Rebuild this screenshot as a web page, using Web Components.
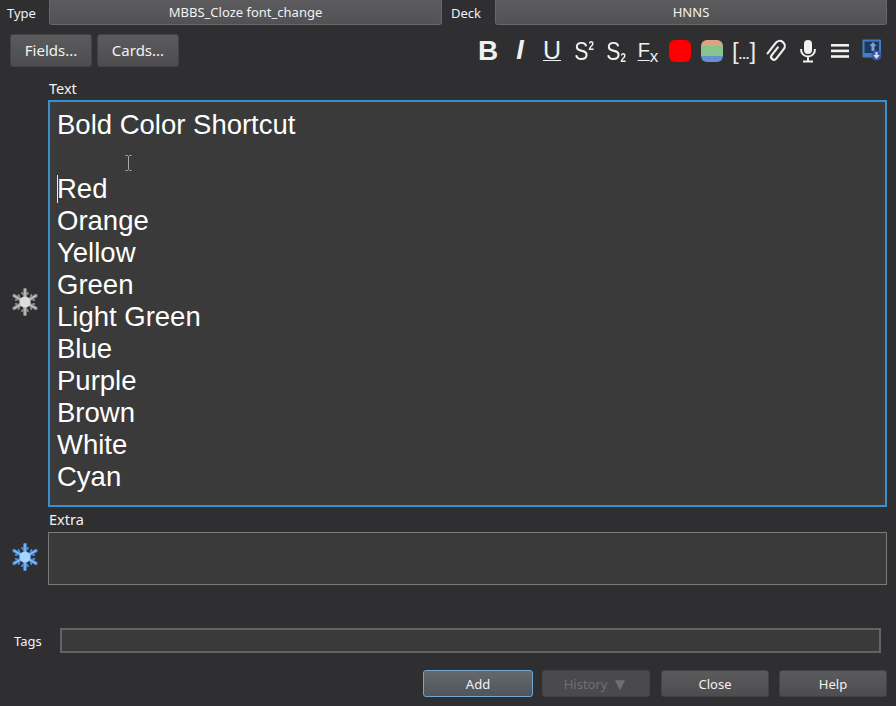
<!DOCTYPE html>
<html>
<head>
<meta charset="utf-8">
<title>Add</title>
<style>
    html, body {
        margin: 0;
        height: 706px;
        overflow: hidden;
        background: #2f2f31;
        font-family: "Noto Sans", "Open Sans", sans-serif;
        font-size: 13px;
        color: #f2f2f2;
    }
</style>
</head>
<body>
<add-window></add-window>

<script>
class QtButton extends HTMLElement {
    constructor() {
        super();
        this.shadowDom = this.attachShadow({ mode: 'open' });
        this.shadowDom.innerHTML = `
            <style>
                :host {
                    display: flex;
                    align-items: center;
                    justify-content: center;
                    box-sizing: border-box;
                    height: var(--h, 27px);
                    width: var(--w, 108px);
                    padding-bottom: var(--pb, 0);
                    border: 1px solid #434345;
                    border-radius: 3px;
                    background: linear-gradient(#5b5b5d, #4d4d4f);
                    color: #f2f2f2;
                    font-size: var(--fs, 13px);
                    white-space: nowrap;
                }
                :host([primary]) {
                    border: 1px solid #6ea6d6;
                    background: linear-gradient(#64696e, #4f555b);
                }
                :host([off]) {
                    background: #4a4a4c;
                    color: #6f6f71;
                }
                :host([combo]) {
                    border: 1px solid #68686a;
                    border-top: none;
                    height: 25px;
                    width: auto;
                    flex: 1;
                    border-radius: 0 0 3px 3px;
                    background: linear-gradient(#5c5c5e, #525254);
                    font-size: 13px;
                }
            </style>
            <slot></slot>
        `
    }
}

class FieldRow extends HTMLElement {
    constructor() {
        super();
        this.shadowDom = this.attachShadow({ mode: 'open' });
        const color = this.getAttribute('sticky') === 'on' ? '#a4d4ff' : '#dcdcdc';
        const edge = this.getAttribute('sticky') === 'on' ? '#4a8fe0' : '#8f8f8f';
        const arm = `<path d="M0 -12.5 V12.5"/>`;
        const arms = [0, 60, 120].map(a => `<g transform="rotate(${a})">${arm}</g>`).join('');
        const tick = `<path d="M-3 -9 L0 -6 L3 -9 M-3 9 L0 6 L3 9"/>`;
        const ticks = [0, 60, 120].map(a => `<g transform="rotate(${a})">${tick}</g>`).join('');
        this.shadowDom.innerHTML = `
            <style>
                :host {
                    display: grid;
                    grid-template-columns: 48px 1fr;
                    grid-template-rows: var(--label-h) var(--box-h);
                    margin-right: 9px;
                }
                .label {
                    grid-column: 2;
                    align-self: end;
                    font-size: 14.5px;
                    line-height: 18px;
                    padding: 0 0 var(--label-pb) 1px;
                }
                .flake {
                    grid-column: 1;
                    grid-row: 2;
                    justify-self: center;
                    align-self: center;
                    margin: -4px 0 0 2px;
                    display: block;
                    filter: blur(.6px);
                }
                .box {
                    grid-column: 2;
                    grid-row: 2;
                    box-sizing: border-box;
                    background: #3a3a3b;
                    border: 1px solid #7a7a7a;
                    overflow: hidden;
                    padding: 8px;
                    font-family: "Liberation Sans", Arial, sans-serif;
                    font-size: 27.5px;
                    line-height: 32px;
                    color: #fff;
                }
                :host([focused]) .box {
                    border: 2px solid #3d8fc9;
                    padding: 7px;
                }
            </style>
            <div class="label">${this.getAttribute('label')}</div>
            <svg class="flake" width="30" height="30" viewBox="-15 -15 30 30" stroke-linecap="round" stroke-linejoin="round" fill="none">
                <g stroke="${edge}" stroke-width="3.6">${arms}</g>
                <g stroke="${edge}" stroke-width="1.8">${ticks}</g>
                <g stroke="${color}" stroke-width="1.2" opacity=".8">${arms}</g>
                <circle r="5.6" fill="${color}"/>
            </svg>
            <div class="box"><slot></slot></div>
        `
    }
}

class EditorToolbar extends HTMLElement {
    constructor() {
        super();
        this.shadowDom = this.attachShadow({ mode: 'open' });
        this.shadowDom.innerHTML = `
            <style>
                :host {
                    display: grid;
                    grid-template-columns: repeat(13, 32px);
                    height: 33px;
                    align-items: center;
                    justify-items: center;
                    color: #f0f0f0;
                    font-family: "Liberation Sans", Arial, sans-serif;
                }
                span { display: block; line-height: 1; white-space: nowrap; }
                .b { font-size: 28px; font-weight: bold; }
                .i { font-size: 27px; font-weight: bold; font-style: italic; }
                .u { font-size: 25px; text-decoration: underline; text-underline-offset: 1px; text-decoration-thickness: 1px; }
                .s { font-size: 26px; transform: scaleX(.82); }
                .s sup, .s sub { font-size: 12px; line-height: 0; font-weight: bold; }
                .s sup { vertical-align: 10px; }
                .s sub { vertical-align: -2px; }
                .f { font-size: 20px; transform: translateY(-1px); }
                .f u { text-underline-offset: 3px; text-decoration-thickness: 1px; }
                .f sub { font-size: 17px; line-height: 0; vertical-align: -5px; }
                .c { font-size: 24px; color: #e8e8e8; }
                .c b { font-size: 13px; }
                .swatch { width: 22px; height: 22px; border-radius: 6px; }
                .red { background: #f00; }
                .rainbow { background: linear-gradient(#dba37f 0 28%, #86c48c 28% 72%, #6a8fd0 72%); }
                svg { display: block; }
            </style>
            <span class="b">B</span>
            <span class="i">I</span>
            <span class="u">U</span>
            <span class="s">S<sup>2</sup></span>
            <span class="s">S<sub>2</sub></span>
            <span class="f"><u>F</u><sub>x</sub></span>
            <div class="swatch red"></div>
            <div class="swatch rainbow"></div>
            <span class="c">[<b>...</b>]</span>
            <svg width="22" height="24" viewBox="0 0 22 24" fill="none" stroke="#eee" stroke-width="2" stroke-linecap="round">
                <path transform="translate(11 12.5) rotate(38) scale(1.1)" d="M-1 -4 V5 a2.6 2.6 0 0 0 5.2 0 V-6 a4.6 4.6 0 0 0 -9.2 0 V6"/>
            </svg>
            <svg width="18" height="24" viewBox="0 0 18 24" fill="none" stroke="#f2f2f2" stroke-width="2">
                <rect x="5" y="1" width="8" height="14" rx="4" fill="#f2f2f2" stroke="none"/>
                <path d="M2 10 C2 20 16 20 16 10 M9 17.5 V22 M4 22.5 H14"/>
            </svg>
            <svg width="18" height="14" viewBox="0 0 18 14" fill="#f0f0f0">
                <rect y="0" width="18" height="2.6"/><rect y="5.6" width="18" height="2.6"/><rect y="11.2" width="18" height="2.6"/>
            </svg>
            <svg width="20" height="22" viewBox="0 0 20 22" style="transform: translateY(-1px)">
                <rect x="0.5" y="0.5" width="18.5" height="18" rx="1" fill="#3f7fc4"/>
                <rect x="2.5" y="2.5" width="14.5" height="11.5" fill="#23365c"/>
                <path d="M11 3 L14.5 7 H12.5 V12 H9.5 V7 H7.5 Z" fill="#6aa6e6"/>
                <circle cx="14.5" cy="16.5" r="5" fill="#3d55a8"/>
                <path d="M13.5 13 H15.5 V16 H17.8 L14.5 20 L11.2 16 H13.5 Z" fill="#d5deef"/>
            </svg>
        `
    }
}

class AddWindow extends HTMLElement {
    constructor() {
        super();
        this.shadowDom = this.attachShadow({ mode: 'open' });
        this.shadowDom.innerHTML = `
            <style>
                :host {
                    display: flex;
                    flex-direction: column;
                    position: relative;
                    width: 896px;
                    height: 706px;
                }
                .top {
                    display: grid;
                    grid-template-columns: 49px 393px 53px 1fr;
                    height: 25px;
                    margin-right: 9px;
                    align-items: center;
                }
                .top span { padding-left: 7px; font-size: 13px; }
                .top span + qt-button + span { padding-left: 9px; }
                .tools {
                    display: flex;
                    margin: 9px 8px 0 10px;
                    gap: 5px;
                    --h: 33px;
                    --w: 82px;
                    --fs: 15px;
                    --pb: 2px;
                }
                editor-toolbar { margin-left: auto; }
                .text { --label-h: 33px; --box-h: 407px; --label-pb: 3px; }
                .extra { --label-h: 25px; --box-h: 53px; --label-pb: 4px; }
                .tags {
                    display: flex;
                    align-items: center;
                    margin: 43px 15px 0 14px;
                    height: 25px;
                }
                .tags label { width: 46px; font-size: 13px; }
                .tags div {
                    flex: 1;
                    height: 25px;
                    box-sizing: border-box;
                    background: #3a3a3b;
                    border: 2px solid #636365;
                }
                .buttons {
                    display: flex;
                    justify-content: flex-end;
                    margin: 17px 9px 0 0;
                }
                .buttons .add { --w: 110px; margin-right: 9px; }
                .buttons .hist { margin-right: 11px; }
                .buttons .close { margin-right: 10px; }
                .tri { font-size: 17px; line-height: 1; margin-left: 4px; }
                .caret {
                    position: absolute;
                    left: 57px;
                    top: 175px;
                    width: 1px;
                    height: 28px;
                    background: #e8e8e8;
                }
                .ibeam {
                    position: absolute;
                    left: 125px;
                    top: 155px;
                }
            </style>
            <div class="top">
                <span>Type</span>
                <qt-button combo>MBBS_Cloze font_change</qt-button>
                <span>Deck</span>
                <qt-button combo>HNNS</qt-button>
            </div>
            <div class="tools">
                <qt-button>Fields...</qt-button>
                <qt-button>Cards...</qt-button>
                <editor-toolbar></editor-toolbar>
            </div>
            <field-row class="text" label="Text" sticky="off" focused>
                <div>Bold Color Shortcut</div>
                <div>&nbsp;</div>
                <div>Red</div>
                <div>Orange</div>
                <div>Yellow</div>
                <div>Green</div>
                <div>Light Green</div>
                <div>Blue</div>
                <div>Purple</div>
                <div>Brown</div>
                <div>White</div>
                <div>Cyan</div>
            </field-row>
            <field-row class="extra" label="Extra" sticky="on"></field-row>
            <div class="tags">
                <label>Tags</label>
                <div></div>
            </div>
            <div class="buttons">
                <qt-button class="add" primary>Add</qt-button>
                <qt-button class="hist" off>History<span class="tri">▼</span></qt-button>
                <qt-button class="close">Close</qt-button>
                <qt-button>Help</qt-button>
            </div>
            <div class="caret"></div>
            <svg class="ibeam" width="7" height="16" viewBox="0 0 7 16" fill="none" stroke="#aaa" stroke-width="1">
                <path d="M0.5 0.5 H2.5 L3.5 1.5 L4.5 0.5 H6.5 M3.5 1.5 V14.5 M0.5 15.5 H2.5 L3.5 14.5 L4.5 15.5 H6.5"/>
            </svg>
        `
    }
}

window.customElements.define('qt-button', QtButton);
window.customElements.define('field-row', FieldRow);
window.customElements.define('editor-toolbar', EditorToolbar);
window.customElements.define('add-window', AddWindow);
</script>
</body>
</html>
